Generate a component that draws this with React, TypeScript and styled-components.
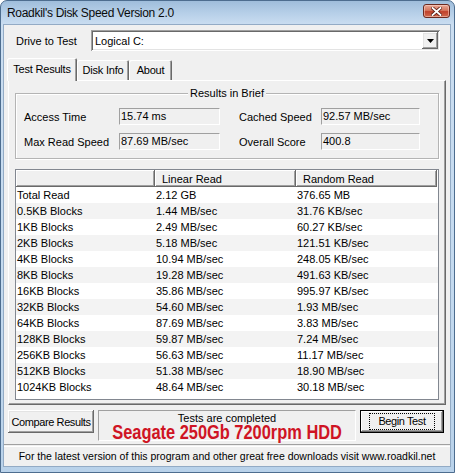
import React from 'react';
import styled, { createGlobalStyle, css } from 'styled-components';

const GlobalStyle = createGlobalStyle`
  html, body {
    margin: 0;
    padding: 0;
  }
  body {
    width: 455px;
    height: 473px;
    overflow: hidden;
    background: #ffffff;
    font-family: 'Liberation Sans', Arial, sans-serif;
    font-size: 11px;
    color: #000;
  }
`;

const raised = css`
  box-shadow: inset -1px -1px 0 #696969, inset 1px 1px 0 #ffffff,
    inset -2px -2px 0 #a0a0a0, inset 2px 2px 0 #e3e3e3;
`;

const sunken = css`
  box-shadow: inset 1px 1px 0 #a0a0a0, inset -1px -1px 0 #ffffff,
    inset 2px 2px 0 #696969, inset -2px -2px 0 #e3e3e3;
`;

const Window = styled.div`
  width: 455px;
  height: 473px;
  box-sizing: border-box;
  display: flex;
  flex-direction: column;
  padding: 0 4px 6px 3px;
  border: 1px solid #4d6d8f;
  border-radius: 7px 7px 0 0;
  background: linear-gradient(
    180deg,
    #9fbddb 0px,
    #b6cfe8 12px,
    #cbdef1 24px,
    #c4daef 60%,
    #b9d2ea 100%
  );
`;

const TitleBar = styled.div`
  height: 24px;
  display: flex;
  justify-content: space-between;
  align-items: flex-start;
  padding-left: 3px;
`;

const Title = styled.span`
  margin-top: 5px;
  font-size: 12px;
  letter-spacing: -0.3px;
  color: #0b0b0b;
`;

const CloseButton = styled.div`
  width: 27px;
  height: 14px;
  margin-top: 3px;
  box-sizing: border-box;
  border: 1px solid #6b2a20;
  border-radius: 3px;
  display: flex;
  align-items: center;
  justify-content: center;
  background: linear-gradient(180deg, #e9a896 0%, #d5775f 45%, #c0412b 55%, #d06a4e 100%);
  box-shadow: inset 0 0 0 1px rgba(255, 220, 210, 0.5);
`;

const Client = styled.div`
  flex: 1;
  display: flex;
  flex-direction: column;
  background: #f0f0f0;
  padding-top: 5px;
  box-shadow: 0 0 0 1px #93abc5;
`;

const DriveRow = styled.div`
  display: flex;
  align-items: center;
  height: 21px;
  padding: 0 10px 0 12px;
`;

const DriveLabel = styled.span`
  width: 75px;
  flex: none;
`;

const Combo = styled.div`
  flex: 1;
  height: 21px;
  box-sizing: border-box;
  background: #ffffff;
  display: flex;
  align-items: center;
  justify-content: space-between;
  padding: 2px 2px 2px 4px;
  ${sunken};
`;

const ComboButton = styled.div`
  width: 16px;
  height: 17px;
  box-sizing: border-box;
  background: #f0f0f0;
  display: flex;
  align-items: center;
  justify-content: center;
  ${raised};
`;

const TabStrip = styled.div`
  margin-top: 7px;
  height: 22px;
  display: flex;
  align-items: flex-end;
  padding-left: 3px;
`;

const Tab = styled.div<{ $active?: boolean; $width: number }>`
  width: ${(p) => p.$width}px;
  box-sizing: border-box;
  display: flex;
  align-items: center;
  justify-content: center;
  background: #f0f0f0;
  letter-spacing: -0.2px;
  border-radius: 2px 2px 0 0;
  box-shadow: inset 1px 1px 0 #ffffff, inset -1px 0 0 #696969, inset -2px 0 0 #a0a0a0;
  ${(p) =>
    p.$active
      ? css`
          height: 23px;
          margin-bottom: -1px;
          position: relative;
          z-index: 1;
          padding-bottom: 2px;
        `
      : css`
          height: 20px;
        `}
`;

const TabPanel = styled.div`
  margin: 0 4px;
  height: 325px;
  box-sizing: border-box;
  border-top: 1px solid #ffffff;
  border-left: 1px solid #ffffff;
  border-right: 1px solid #696969;
  border-bottom: 1px solid #696969;
  box-shadow: inset -1px -1px 0 #a0a0a0;
  padding: 12px 6px 3px 6px;
`;

const GroupBox = styled.div`
  position: relative;
  height: 66px;
  box-sizing: border-box;
  border: 1px solid #b4b4b4;
  box-shadow: inset 1px 1px 0 #ffffff, 1px 1px 0 #ffffff;
  padding: 14px 0 0 8px;
`;

const GroupTitle = styled.span`
  position: absolute;
  top: -7px;
  left: 50%;
  transform: translateX(-50%);
  padding: 0 2px;
  background: #f0f0f0;
  line-height: 13px;
  white-space: nowrap;
`;

const BriefGrid = styled.div`
  display: grid;
  grid-template-columns: 95px 101px 101px 99px;
  grid-auto-rows: 17px;
  row-gap: 8px;
  align-items: center;
`;

const BriefLabel = styled.span<{ $indent?: number }>`
  padding-left: ${(p) => p.$indent ?? 0}px;
`;

const Readout = styled.div`
  height: 17px;
  box-sizing: border-box;
  border-top: 1px solid #a0a0a0;
  border-left: 1px solid #a0a0a0;
  border-bottom: 1px solid #ffffff;
  border-right: 1px solid #ffffff;
  padding-left: 1px;
  line-height: 14px;
`;

const ListView = styled.div`
  margin-top: 10px;
  height: 231px;
  box-sizing: border-box;
  border: 1px solid #828790;
  background: #ffffff;
  overflow: hidden;
`;

const columns = '139px 141px 141px';

const HeaderRow = styled.div`
  display: grid;
  grid-template-columns: ${columns};
  height: 17px;
`;

const HeaderCell = styled.div`
  background: #f0f0f0;
  padding-left: 7px;
  display: flex;
  align-items: center;
  box-shadow: inset -1px -1px 0 #696969, inset 1px 1px 0 #ffffff, inset -2px -2px 0 #a0a0a0;
`;

const ListRow = styled.div<{ $alt: boolean }>`
  display: grid;
  grid-template-columns: ${columns};
  height: 16px;
  line-height: 16px;
  background: ${(p) => (p.$alt ? '#f3f3f3' : '#ffffff')};
`;

const ListCell = styled.div`
  padding-left: 1px;
  white-space: nowrap;
`;

const BottomRow = styled.div`
  margin-top: 5px;
  height: 31px;
  display: flex;
  align-items: flex-start;
  gap: 4px;
  padding-left: 4px;
`;

const Button = styled.div<{ $width: number; $default?: boolean }>`
  width: ${(p) => p.$width}px;
  height: 23px;
  box-sizing: border-box;
  display: flex;
  align-items: center;
  justify-content: center;
  background: #f0f0f0;
  white-space: nowrap;
  letter-spacing: -0.4px;
  ${(p) =>
    p.$default
      ? css`
          border: 1px solid #000;
          box-shadow: inset -1px -1px 0 #696969, inset 1px 1px 0 #ffffff,
            inset -2px -2px 0 #a0a0a0;
        `
      : raised}
`;

const FocusRect = styled.span`
  padding: 1px 8px 2px;
  border: 1px dotted #000;
`;

const StatusPanel = styled.div`
  width: 258px;
  height: 31px;
  box-sizing: border-box;
  border-top: 1px solid #a0a0a0;
  border-left: 1px solid #a0a0a0;
  border-bottom: 1px solid #ffffff;
  border-right: 1px solid #ffffff;
  display: flex;
  flex-direction: column;
  align-items: center;
  padding-top: 1px;
`;

const StatusText = styled.span`
  line-height: 12px;
`;

const BrandText = styled.span`
  line-height: 14px;
  margin-top: 1px;
  font-weight: bold;
  font-size: 20px;
  color: #cf1424;
  white-space: nowrap;
  transform: scaleX(0.82);
`;

const Separator = styled.div`
  margin-top: 3px;
  height: 1px;
  border-top: 1px solid #a0a0a0;
  border-bottom: 1px solid #ffffff;
`;

const Footer = styled.div`
  flex: 1;
  display: flex;
  align-items: center;
  justify-content: center;
  padding-bottom: 1px;
  font-size: 10.5px;
  white-space: nowrap;
`;

const rows: [string, string, string][] = [
  ['Total Read', '2.12 GB', '376.65 MB'],
  ['0.5KB Blocks', '1.44 MB/sec', '31.76 KB/sec'],
  ['1KB Blocks', '2.49 MB/sec', '60.27 KB/sec'],
  ['2KB Blocks', '5.18 MB/sec', '121.51 KB/sec'],
  ['4KB Blocks', '10.94 MB/sec', '248.05 KB/sec'],
  ['8KB Blocks', '19.28 MB/sec', '491.63 KB/sec'],
  ['16KB Blocks', '35.86 MB/sec', '995.97 KB/sec'],
  ['32KB Blocks', '54.60 MB/sec', '1.93 MB/sec'],
  ['64KB Blocks', '87.69 MB/sec', '3.83 MB/sec'],
  ['128KB Blocks', '59.87 MB/sec', '7.24 MB/sec'],
  ['256KB Blocks', '56.63 MB/sec', '11.17 MB/sec'],
  ['512KB Blocks', '51.38 MB/sec', '18.90 MB/sec'],
  ['1024KB Blocks', '48.64 MB/sec', '30.18 MB/sec'],
];

const CloseGlyph = () => (
  <svg width='11' height='9' viewBox='0 0 11 9'>
    <path d='M1.5 1 L9.5 8 M9.5 1 L1.5 8' stroke='#5a1c14' strokeWidth='3.4' strokeLinecap='square' />
    <path d='M1.5 1 L9.5 8 M9.5 1 L1.5 8' stroke='#ffffff' strokeWidth='1.8' strokeLinecap='square' />
  </svg>
);

const DropArrow = () => (
  <svg width='7' height='4' viewBox='0 0 7 4'>
    <path d='M0 0 H7 L3.5 4 Z' fill='#000' />
  </svg>
);

const App: React.FC = () => {
  return (
    <>
      <GlobalStyle />
      <Window>
        <TitleBar>
          <Title>Roadkil's Disk Speed Version 2.0</Title>
          <CloseButton>
            <CloseGlyph />
          </CloseButton>
        </TitleBar>

        <Client>
          <DriveRow>
            <DriveLabel>Drive to Test</DriveLabel>
            <Combo>
              <span>Logical C:</span>
              <ComboButton>
                <DropArrow />
              </ComboButton>
            </Combo>
          </DriveRow>

          <TabStrip>
            <Tab $active $width={70}>
              Test Results
            </Tab>
            <Tab $width={52}>Disk Info</Tab>
            <Tab $width={43}>About</Tab>
          </TabStrip>

          <TabPanel>
            <GroupBox>
              <GroupTitle>Results in Brief</GroupTitle>
              <BriefGrid>
                <BriefLabel>Access Time</BriefLabel>
                <Readout>15.74 ms</Readout>
                <BriefLabel $indent={19}>Cached Speed</BriefLabel>
                <Readout>92.57 MB/sec</Readout>
                <BriefLabel>Max Read Speed</BriefLabel>
                <Readout>87.69 MB/sec</Readout>
                <BriefLabel $indent={19}>Overall Score</BriefLabel>
                <Readout>400.8</Readout>
              </BriefGrid>
            </GroupBox>

            <ListView>
              <HeaderRow>
                <HeaderCell />
                <HeaderCell>Linear Read</HeaderCell>
                <HeaderCell>Random Read</HeaderCell>
              </HeaderRow>
              {rows.map(([name, linear, random], i) => (
                <ListRow key={name} $alt={i % 2 === 1}>
                  <ListCell>{name}</ListCell>
                  <ListCell>{linear}</ListCell>
                  <ListCell>{random}</ListCell>
                </ListRow>
              ))}
            </ListView>
          </TabPanel>

          <BottomRow>
            <Button $width={86}>Compare Results</Button>
            <StatusPanel>
              <StatusText>Tests are completed</StatusText>
              <BrandText>Seagate 250Gb 7200rpm HDD</BrandText>
            </StatusPanel>
            <Button $width={84} $default>
              <FocusRect>Begin Test</FocusRect>
            </Button>
          </BottomRow>

          <Separator />
          <Footer>
            For the latest version of this program and other great free downloads visit www.roadkil.net
          </Footer>
        </Client>
      </Window>
    </>
  );
};

export default App;
